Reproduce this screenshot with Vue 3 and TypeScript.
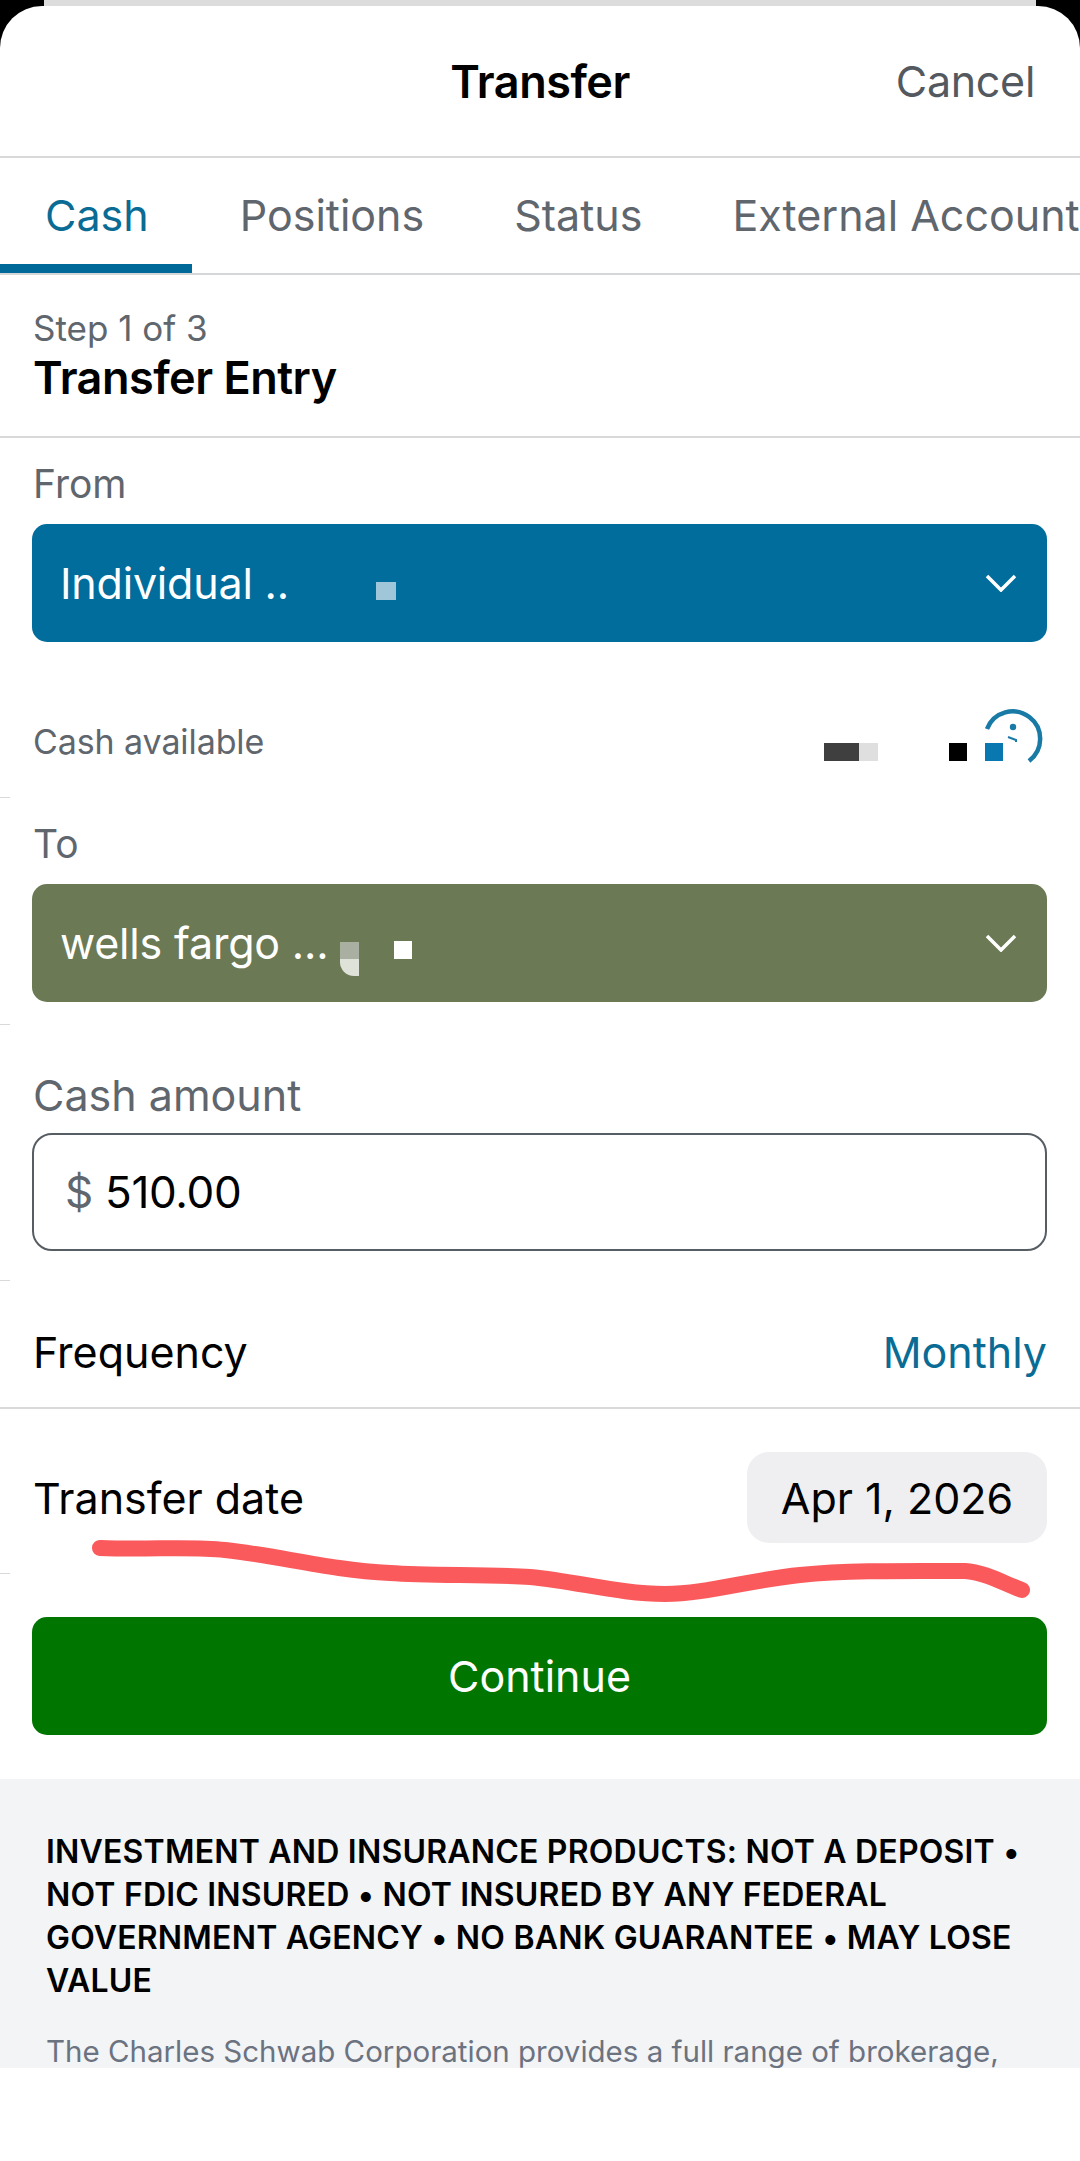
<template>
  <div class="screen">
    <div class="peek"></div>
    <div class="sheet">
      <header class="nav">
        <span class="nav-title">Transfer</span>
        <span class="nav-cancel">Cancel</span>
      </header>

      <nav class="tabs">
        <span v-for="tab in tabs" :key="tab" class="tab" :class="{ active: tab === 'Cash' }">{{ tab }}</span>
      </nav>

      <div class="step">
        <p class="step-count">Step 1 of 3</p>
        <h1 class="step-title">Transfer Entry</h1>
      </div>

      <div class="form">
        <p class="label from-label">From</p>
        <div class="select from-select">
          <span>Individual ..</span>
          <i class="mask from-mask"></i>
          <svg class="chevron" viewBox="0 0 32 18"><path d="M2 2l14 14L30 2" /></svg>
        </div>

        <div class="cash-row">
          <span class="cash-label">Cash available</span>
          <i class="mask cash-dark"></i>
          <i class="mask cash-light"></i>
          <i class="mask cash-black"></i>
          <i class="mask cash-blue"></i>
          <svg class="clock" viewBox="0 0 60 60">
            <path d="M4 21A27.5 27.5 0 1 1 46 53" />
            <circle cx="30" cy="19" r="3.2" />
            <path class="clock-tick" d="M25 29l8 3v2" />
          </svg>
        </div>
        <i class="tick tick-cash"></i>

        <p class="label to-label">To</p>
        <div class="select to-select">
          <span>wells fargo ...</span>
          <span class="to-mask-stack"><i class="to-mask-top"></i><i class="to-mask-bottom"></i></span>
          <i class="mask to-mask"></i>
          <svg class="chevron" viewBox="0 0 32 18"><path d="M2 2l14 14L30 2" /></svg>
        </div>
        <i class="tick tick-to"></i>

        <p class="label amount-label">Cash amount</p>
        <div class="amount">
          <span class="dollar">$</span>
          <span>{{ amount }}</span>
        </div>
        <i class="tick tick-amount"></i>

        <div class="row frequency">
          <span>Frequency</span>
          <span class="link">Monthly</span>
        </div>

        <div class="row date">
          <span>Transfer date</span>
          <span class="date-pill">Apr 1, 2026</span>
        </div>
        <i class="tick tick-date"></i>

        <button class="continue">Continue</button>
      </div>

      <footer class="legal">
        <p class="legal-title">INVESTMENT AND INSURANCE PRODUCTS: NOT A DEPOSIT • NOT FDIC INSURED • NOT INSURED BY ANY FEDERAL GOVERNMENT AGENCY • NO BANK GUARANTEE • MAY LOSE VALUE</p>
        <p class="legal-text">The Charles Schwab Corporation provides a full range of brokerage,</p>
      </footer>
    </div>

    <!-- hand drawn marker over the screenshot -->
    <svg class="scribble" viewBox="0 0 1080 2161">
      <path d="M100 1548C150 1550 190 1546 225 1550C280 1556 330 1570 390 1573C430 1576 490 1574 530 1577C580 1582 620 1594 665 1594C705 1594 750 1580 800 1575C850 1570 910 1571 965 1571C985 1572 1005 1584 1022 1590" />
    </svg>
  </div>
</template>

<script setup lang="ts">
const tabs: string[] = ['Cash', 'Positions', 'Status', 'External Accounts']
const amount = '510.00'
</script>

<style>
html,
body {
  margin: 0;
  background: #fff;
}
</style>

<style scoped>
.screen {
  position: relative;
  width: 1080px;
  height: 2161px;
  overflow: hidden;
  background: linear-gradient(#000 50px, #fff 50px);
  font-family: Inter, 'Liberation Sans', sans-serif;
  color: #000;
}

.peek {
  height: 6px;
  margin: 0 44px;
  background: #dcdcdc;
}

.sheet {
  height: 2155px;
  background: #fff;
  border-radius: 42px 42px 0 0;
}

p,
h1 {
  margin: 0;
}

.nav {
  position: relative;
  height: 150px;
  display: flex;
  align-items: center;
  justify-content: center;
  border-bottom: 2px solid #d9d9db;
  font-size: 43px;
}

.nav-title {
  font-size: 45px;
  font-weight: 600;
  letter-spacing: -0.5px;
}

.nav-cancel {
  position: absolute;
  right: 45px;
  color: #53595f;
  letter-spacing: -0.3px;
}

.tabs {
  height: 115px;
  display: flex;
  border-bottom: 2px solid #d5d6d8;
  overflow: hidden;
  white-space: nowrap;
  font-size: 43px;
  color: #5f666d;
}

.tab {
  flex: none;
  padding: 0 45px;
  line-height: 115px;
  box-sizing: border-box;
  height: 115px;
}

.tab.active {
  padding-right: 43px;
  margin-right: 3px;
  color: #0a6c94;
  border-bottom: 9px solid #00699a;
}

.step {
  height: 163px;
  box-sizing: border-box;
  padding: 29px 33px 0;
  border-bottom: 2px solid #d9d9db;
}

.step-count {
  font-size: 35px;
  line-height: 48px;
  color: #5f666d;
}

.step-title {
  font-size: 45px;
  line-height: 52px;
  font-weight: 600;
  letter-spacing: -0.5px;
}

.form {
  padding: 23px 33px 0;
}

.label {
  font-size: 39px;
  line-height: 46px;
  color: #5f666d;
  margin-bottom: 17px;
}

.select {
  height: 118px;
  margin-left: -1px;
  border-radius: 15px;
  display: flex;
  align-items: center;
  padding: 0 27px 0 28px;
  color: #fff;
  font-size: 43px;
  letter-spacing: -0.2px;
}

.from-select {
  background: #006d9c;
}

.to-select {
  background: #6b7955;
}

.chevron {
  width: 32px;
  height: 18px;
  margin-left: auto;
  margin-right: 3px;
  fill: none;
  stroke: #fff;
  stroke-width: 3.5;
}

.mask {
  display: block;
  flex: none;
  width: 18px;
  height: 18px;
}

.from-mask {
  width: 20px;
  background: #a0c6da;
  margin: 16px 0 0 87px;
}

.cash-row {
  height: 60px;
  margin-top: 70px;
  display: flex;
  align-items: center;
  position: relative;
}

.cash-label {
  font-size: 34px;
  color: #5f666d;
  letter-spacing: -0.1px;
  margin: -2px auto 0 0;
}

.cash-row .mask {
  margin-top: 20px;
}

.cash-dark {
  width: 35px !important;
  background: #3f3f3f;
}

.cash-light {
  width: 19px !important;
  background: #dfdfdf;
}

.cash-black {
  background: #000;
  margin-left: 71px;
}

.cash-blue {
  background: #0a78b0;
  margin-left: 18px;
  margin-right: 44px;
}

.clock {
  position: absolute;
  right: 4px;
  top: -4px;
  width: 60px;
  height: 60px;
  fill: none;
  stroke: #1a7aa6;
  stroke-width: 4.5;
}

.clock circle {
  fill: #1a7aa6;
  stroke: none;
}

.clock-tick {
  stroke-width: 2;
}

.tick {
  display: block;
  width: 10px;
  height: 1px;
  margin-left: -33px;
  background: #d9d9db;
}

.tick-cash {
  margin-top: 25px;
}

.to-label {
  margin-top: 23px;
}

.to-mask-stack {
  display: flex;
  flex-direction: column;
  margin: 32px 0 0 12px;
  position: relative;
}

.to-mask-top {
  width: 19px;
  height: 17px;
  background: #a9afa1;
}

.to-mask-bottom {
  width: 19px;
  height: 17px;
  background: #dfe2d9;
  border-radius: 0 0 0 14px;
}

.to-mask {
  background: #fff;
  margin: 14px 0 0 35px;
}

.tick-to {
  margin-top: 22px;
}

.amount-label {
  font-size: 43px;
  margin-top: 47px;
  margin-bottom: 15px;
}

.amount {
  height: 118px;
  margin-left: -1px;
  box-sizing: border-box;
  border: 2px solid #565d63;
  border-radius: 20px;
  display: flex;
  align-items: center;
  gap: 12px;
  padding: 0 31px;
  font-size: 44px;
  letter-spacing: -0.3px;
}

.dollar {
  color: #5f666d;
}

.tick-amount {
  margin-top: 29px;
}

.row {
  display: flex;
  align-items: center;
  justify-content: space-between;
  font-size: 43px;
}

.frequency {
  height: 128px;
  box-sizing: border-box;
  padding-top: 16px;
  margin: 0 -33px;
  padding-left: 33px;
  padding-right: 33px;
  border-bottom: 2px solid #d9d9db;
}

.link {
  color: #0a6c94;
}

.date {
  margin-top: 43px;
}

.date-pill {
  width: 300px;
  height: 91px;
  border-radius: 22px;
  background: #efeff1;
  display: flex;
  align-items: center;
  justify-content: center;
}

.tick-date {
  margin-top: 30px;
}

.continue {
  display: block;
  width: calc(100% + 1px);
  height: 118px;
  margin: 43px 0 0 -1px;
  border: none;
  border-radius: 15px;
  background: #007500;
  color: #fff;
  font-family: inherit;
  font-size: 43px;
}

.legal {
  height: 289px;
  margin-top: 44px;
  box-sizing: border-box;
  padding: 51px 46px 0;
  overflow: hidden;
  background: #f3f4f6;
}

.legal-title {
  font-size: 32px;
  line-height: 43px;
  font-weight: 600;
  letter-spacing: 0.2px;
}

.legal-text {
  margin-top: 27px;
  font-size: 29.5px;
  line-height: 44px;
  color: #6b7280;
  white-space: nowrap;
}

.scribble {
  position: absolute;
  inset: 0;
  width: 1080px;
  height: 2161px;
  pointer-events: none;
  fill: none;
  stroke: #fb5a5c;
  stroke-width: 16;
  stroke-linecap: round;
}
</style>
